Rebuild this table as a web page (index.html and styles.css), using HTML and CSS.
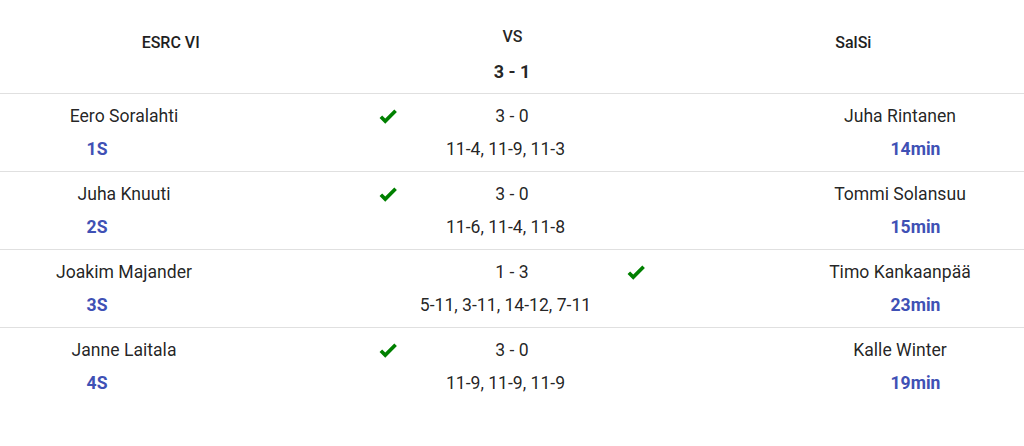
FILE: index.html
```html
<!DOCTYPE html>
<html lang="fi">
<head>
<meta charset="utf-8">
<title>ESRC VI vs SalSi</title>
<link rel="stylesheet" href="styles.css">
</head>
<body>
<div class="match">
  <div class="header">
    <div class="team">ESRC VI</div>
    <div class="center">
      <div class="vs">VS</div>
      <div class="total">3 - 1</div>
    </div>
    <div class="team">SalSi</div>
  </div>

  <div class="row">
    <div class="player left"><div class="name">Eero Soralahti</div><div class="tag">1S</div></div>
    <div class="mid">
      <div class="win"><svg viewBox="0 0 24 24"><path d="M9,20.42L2.79,14.21L5.62,11.38L9,14.77L18.88,4.88L21.71,7.71L9,20.42Z"/></svg></div>
      <div class="score"><div class="sets">3 - 0</div><div class="points">11-4, 11-9, 11-3</div></div>
      <div class="win"></div>
    </div>
    <div class="player right"><div class="name">Juha Rintanen</div><div class="tag">14min</div></div>
  </div>

  <div class="row">
    <div class="player left"><div class="name">Juha Knuuti</div><div class="tag">2S</div></div>
    <div class="mid">
      <div class="win"><svg viewBox="0 0 24 24"><path d="M9,20.42L2.79,14.21L5.62,11.38L9,14.77L18.88,4.88L21.71,7.71L9,20.42Z"/></svg></div>
      <div class="score"><div class="sets">3 - 0</div><div class="points">11-6, 11-4, 11-8</div></div>
      <div class="win"></div>
    </div>
    <div class="player right"><div class="name">Tommi Solansuu</div><div class="tag">15min</div></div>
  </div>

  <div class="row">
    <div class="player left"><div class="name">Joakim Majander</div><div class="tag">3S</div></div>
    <div class="mid">
      <div class="win"></div>
      <div class="score"><div class="sets">1 - 3</div><div class="points">5-11, 3-11, 14-12, 7-11</div></div>
      <div class="win"><svg viewBox="0 0 24 24"><path d="M9,20.42L2.79,14.21L5.62,11.38L9,14.77L18.88,4.88L21.71,7.71L9,20.42Z"/></svg></div>
    </div>
    <div class="player right"><div class="name">Timo Kankaanpää</div><div class="tag">23min</div></div>
  </div>

  <div class="row last">
    <div class="player left"><div class="name">Janne Laitala</div><div class="tag">4S</div></div>
    <div class="mid">
      <div class="win"><svg viewBox="0 0 24 24"><path d="M9,20.42L2.79,14.21L5.62,11.38L9,14.77L18.88,4.88L21.71,7.71L9,20.42Z"/></svg></div>
      <div class="score"><div class="sets">3 - 0</div><div class="points">11-9, 11-9, 11-9</div></div>
      <div class="win"></div>
    </div>
    <div class="player right"><div class="name">Kalle Winter</div><div class="tag">19min</div></div>
  </div>
</div>
</body>
</html>
```

FILE: styles.css
```css
html, body {
  margin: 0;
  padding: 0;
  background: #ffffff;
}

body {
  font-family: Roboto, "Noto Sans", "Liberation Sans", sans-serif;
  color: rgba(0, 0, 0, 0.87);
  font-size: 16px;
  line-height: 24px;
}

.header {
  display: grid;
  grid-template-columns: 1fr 1fr 1fr;
  height: 94px;
  box-sizing: border-box;
  padding-top: 25px;
  border-bottom: 1px solid #e0e0e0;
}

.team {
  text-align: center;
  font-weight: 500;
  font-size: 16px;
  padding-top: 6px;
  color: #1f1f1f;
}

.center {
  text-align: center;
}

.vs {
  font-weight: 500;
  margin-left: 1px;
}

.total {
  margin-top: 11px;
  font-size: 18px;
  font-weight: 700;
}

.row {
  display: grid;
  grid-template-columns: 248px 1fr 248px;
  height: 78px;
  box-sizing: border-box;
  padding-top: 10px;
  border-bottom: 1px solid #e0e0e0;
  font-size: 17.6px;
}

.row.last {
  border-bottom: none;
}

.player {
  display: flex;
  flex-direction: column;
  gap: 9px;
  text-align: center;
}

.tag {
  color: #3f51b5;
  font-weight: 700;
}

.left .tag {
  padding-right: 54px;
}

.right .tag {
  padding-left: 31px;
}

.mid {
  display: flex;
  justify-content: center;
}

.win {
  width: 22px;
  height: 24px;
  display: flex;
  align-items: center;
}

.win svg {
  width: 22px;
  height: 22px;
  fill: #008000;
  display: block;
}

.score {
  width: 226px;
  display: flex;
  flex-direction: column;
  gap: 9px;
  text-align: center;
}

.points {
  padding-right: 13px;
}
```
